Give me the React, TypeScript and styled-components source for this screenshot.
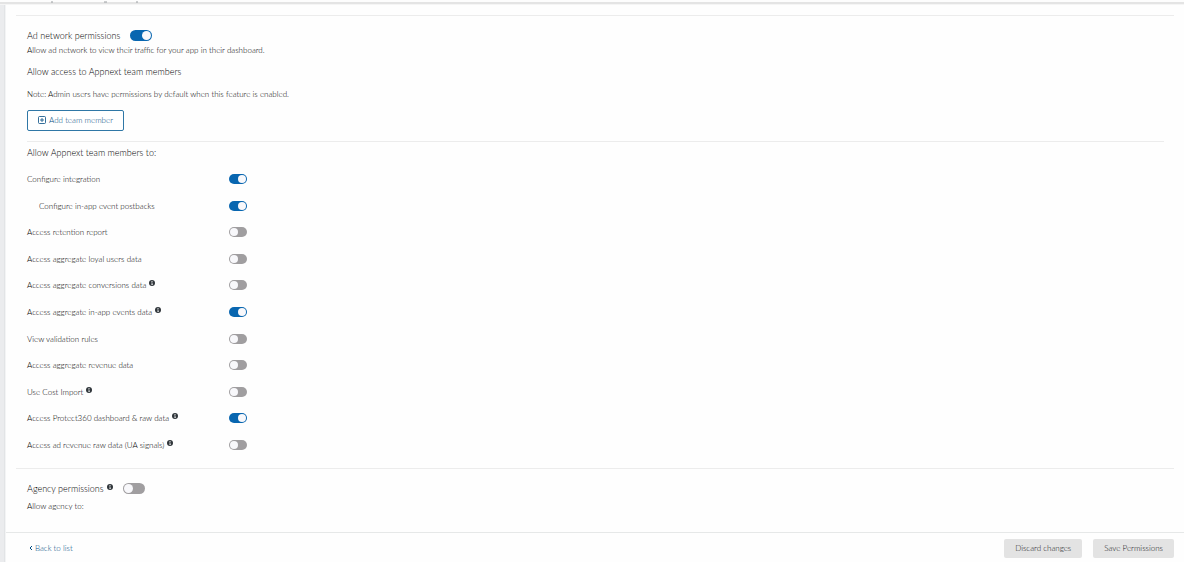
import React, { useState } from 'react';
import styled, { createGlobalStyle, css } from 'styled-components';

const GlobalStyle = createGlobalStyle`
  *, *::before, *::after { box-sizing: border-box; }
  body {
    margin: 0;
    background: #fefefe;
    color: #000;
    font-family: Lato, "Open Sans", sans-serif;
    font-size: 8px;
    font-weight: 300;
    line-height: 10px;
  }
  h2, h3, p, ul { margin: 0; padding: 0; font-weight: 300; }
`;

const Page = styled.div`
  display: flex;
  min-height: 100vh;
`;

const Rail = styled.aside`
  flex: 0 0 6px;
  background: linear-gradient(to right, #ebecee 0 4px, #e2e4e6 4px 5px, #f3f4f5 5px);
`;

const Content = styled.div`
  flex: 1;
  min-width: 0;
  display: flex;
  flex-direction: column;
`;

const TopEdge = styled.header`
  position: absolute;
  top: 0;
  left: 0;
  right: 0;
  height: 5px;
  background: linear-gradient(to bottom, #fdfdfd 0 2px, #e4e4e4 2px 4px, #f5f5f5 4px);
`;

const ClippedTitle = styled.svg`
  display: block;
  margin-left: 51px;
`;

const Main = styled.main`
  flex: 1;
  padding: 15px 10px 0;
`;

const Section = styled.section`
  padding: 13px 10px 10px 11px;
  border-top: 1px solid #ececec;
`;

const TitleRow = styled.div`
  display: flex;
  align-items: center;
  height: 13px;
`;

const Title = styled.h2`
  font-size: 9px;
  line-height: 13px;
`;

const Subtitle = styled.h3`
  margin-top: 11px;
  font-size: 9px;
  line-height: 12px;
`;

const Text = styled.p<{ $gap: number }>`
  margin-top: ${({ $gap }) => $gap}px;
`;

const Divider = styled.hr`
  height: 1px;
  margin: 10px 0 -6px;
  border: 0;
  background: #ececec;
`;

const AddButton = styled.button`
  display: flex;
  align-items: center;
  gap: 3px;
  height: 21px;
  margin-top: 11px;
  padding: 0 10px 1px;
  border: 1px solid #2f77a6;
  border-radius: 2px;
  background: #fff;
  color: #004a80;
  font: inherit;
`;

const PermissionList = styled.ul`
  display: grid;
  grid-auto-rows: 1fr;
  min-height: 292px;
  margin-top: 7px;
  list-style: none;
`;

const PermissionRow = styled.li`
  display: flex;
  align-items: center;
`;

const PermissionLabel = styled.label<{ $nested?: boolean }>`
  flex: 0 0 202px;
  padding-left: ${({ $nested }) => ($nested ? 12 : 0)}px;
`;

const large = css`
  width: 22px;
  height: 11px;
  margin: 0 0 0 10px;
  &::before { width: 9px; height: 9px; }
  &:checked::before { margin-left: 11px; }
`;

const small = css`
  width: 18px;
  height: 10px;
  margin: 0;
  &::before { width: 8px; height: 8px; }
  &:checked::before { margin-left: 8px; }
`;

const Toggle = styled.input<{ $large?: boolean }>`
  appearance: none;
  display: flex;
  align-items: center;
  padding: 0 1px;
  border-radius: 6px;
  background: #a09ea0;
  &::before {
    content: '';
    border-radius: 50%;
    background: #f8f8fb;
  }
  &:checked { background: #0866b0; }
  ${({ $large }) => ($large ? large : small)}
`;

const InfoSvg = styled.svg`
  margin-left: 3px;
  vertical-align: 2px;
`;

const Footer = styled.footer`
  display: flex;
  align-items: center;
  gap: 11px;
  height: 30px;
  padding: 1px 10px 0 23px;
  border-top: 1px solid #e6e8e8;
`;

const BackLink = styled.a`
  display: flex;
  align-items: center;
  gap: 2px;
  margin-right: auto;
  color: #004a80;
  text-decoration: none;
`;

const FooterButton = styled.button`
  height: 19px;
  padding: 0 11px;
  border: 0;
  border-radius: 2px;
  background: #e3e3e3;
  color: #101416;
  font: inherit;
`;

const InfoIcon = () => (
  <InfoSvg width="6" height="6" viewBox="0 0 12 12" aria-hidden="true">
    <circle cx="6" cy="6" r="6" fill="#30363b" />
    <path d="M5 2h2v2H5zM4.500 5H7v4h1v1H4.500V9h.7V6h-.7z" fill="#e8eaeb" />
  </InfoSvg>
);

interface Permission {
  id: string;
  label: string;
  on?: boolean;
  info?: boolean;
  nested?: boolean;
}

const permissions: Permission[] = [
  { id: 'integration', label: 'Configure integration', on: true },
  { id: 'postbacks', label: 'Configure in-app event postbacks', on: true, nested: true },
  { id: 'retention', label: 'Access retention report' },
  { id: 'loyal', label: 'Access aggregate loyal users data' },
  { id: 'conversions', label: 'Access aggregate conversions data', info: true },
  { id: 'events', label: 'Access aggregate in-app events data', on: true, info: true },
  { id: 'validation', label: 'View validation rules' },
  { id: 'revenue', label: 'Access aggregate revenue data' },
  { id: 'cost', label: 'Use Cost Import', info: true },
  { id: 'protect', label: 'Access Protect360 dashboard & raw data', on: true, info: true },
  { id: 'signals', label: 'Access ad revenue raw data (UA signals)', info: true },
];

function Switch({ id, on, large: big }: { id: string; on?: boolean; large?: boolean }) {
  const [checked, setChecked] = useState(!!on);
  return (
    <Toggle
      id={id}
      type="checkbox"
      role="switch"
      $large={big}
      checked={checked}
      onChange={(e) => setChecked(e.target.checked)}
    />
  );
}

export default function App() {
  return (
    <>
      <GlobalStyle />
      <Page>
        <Rail />
        <Content>
          <TopEdge>
            <ClippedTitle width="90" height="4" aria-hidden="true">
              <path d="M1 1v2M53 2h3M86 1v2" stroke="#9a9ea1" fill="none" />
            </ClippedTitle>
          </TopEdge>
          <Main>
            <Section>
              <TitleRow>
                <Title><label htmlFor="network">Ad network permissions</label></Title>
                <Switch id="network" on large />
              </TitleRow>
              <Text $gap={3}>Allow ad network to view their traffic for your app in their dashboard.</Text>
              <Subtitle>Allow access to Appnext team members</Subtitle>
              <Text $gap={11}>Note: Admin users have permissions by default when this feature is enabled.</Text>
              <AddButton type="button">
                <svg width="8" height="8" viewBox="0 0 8 8" fill="none" stroke="currentColor" aria-hidden="true">
                  <rect x="0.500" y="0.500" width="7" height="7" rx="1" strokeWidth="0.800" />
                  <path d="M4 2v4M2 4h4" strokeWidth="0.800" />
                </svg>
                Add team member
              </AddButton>
              <Divider />
              <Subtitle>Allow Appnext team members to:</Subtitle>
              <PermissionList>
                {permissions.map((p) => (
                  <PermissionRow key={p.id}>
                    <PermissionLabel htmlFor={p.id} $nested={p.nested}>
                      {p.label}
                      {p.info && <InfoIcon />}
                    </PermissionLabel>
                    <Switch id={p.id} on={p.on} />
                  </PermissionRow>
                ))}
              </PermissionList>
            </Section>
            <Section>
              <TitleRow>
                <Title><label htmlFor="agency">Agency permissions<InfoIcon /></label></Title>
                <Switch id="agency" large />
              </TitleRow>
              <Text $gap={6}>Allow agency to:</Text>
            </Section>
          </Main>
          <Footer>
            <BackLink href="#list">
              <svg width="4" height="6" viewBox="0 0 4 6" fill="none" stroke="currentColor" aria-hidden="true">
                <path d="M3 1L1 3l2 2" />
              </svg>
              Back to list
            </BackLink>
            <FooterButton type="button">Discard changes</FooterButton>
            <FooterButton type="button">Save Permissions</FooterButton>
          </Footer>
        </Content>
      </Page>
    </>
  );
}
